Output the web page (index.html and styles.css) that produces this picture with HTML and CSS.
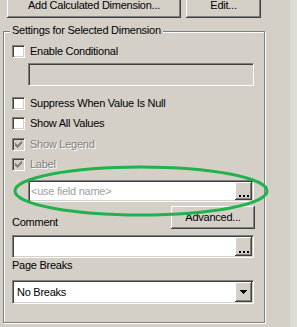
FILE: index.html
```html
<!DOCTYPE html>
<html lang="en">
<head>
    <meta charset="UTF-8">
    <meta name="viewport" content="width=device-width, initial-scale=1.0">
    <title>Dimension Properties</title>
    <link rel="stylesheet" href="styles.css">
</head>
<body>
    <div class="panel">
        <div class="top-buttons">
            <button class="btn btn-add">Add Calculated Dimension...</button>
            <button class="btn btn-edit">Edit...</button>
        </div>

        <div class="group">
            <span class="group-title">Settings for Selected Dimension</span>

            <label class="check-row row-enable">
                <span class="check"></span>Enable Conditional
            </label>
            <div class="field field-cond disabled"></div>

            <label class="check-row row-suppress">
                <span class="check"></span>Suppress When Value Is Null
            </label>
            <label class="check-row row-all">
                <span class="check"></span>Show All Values
            </label>
            <label class="check-row row-legend disabled">
                <span class="check"><svg width="9" height="9" viewBox="0 0 9 9"><path d="M7 1h1v1h-1z M6 2h2v1h-2z M1 3h1v1h-1z M5 3h3v1h-3z M1 4h2v1h-2z M4 4h3v1h-3z M1 5h5v1h-5z M2 6h3v1h-3z M3 7h1v1h-1z"/></svg></span>Show Legend
            </label>
            <label class="check-row row-label disabled">
                <span class="check"><svg width="9" height="9" viewBox="0 0 9 9"><path d="M7 1h1v1h-1z M6 2h2v1h-2z M1 3h1v1h-1z M5 3h3v1h-3z M1 4h2v1h-2z M4 4h3v1h-3z M1 5h5v1h-5z M2 6h3v1h-3z M3 7h1v1h-1z"/></svg></span>Label
            </label>

            <div class="field field-name">
                <span class="placeholder">&lt;use field name&gt;</span>
                <span class="field-btn"><svg width="10" height="2" viewBox="0 0 10 2"><path d="M0 0h2v2h-2z M4 0h2v2h-2z M8 0h2v2h-2z"/></svg></span>
            </div>

            <div class="comment-row">
                <span class="label">Comment</span>
                <button class="btn btn-advanced">Advanced...</button>
            </div>
            <div class="field field-comment">
                <span class="placeholder"></span>
                <span class="field-btn"><svg width="10" height="2" viewBox="0 0 10 2"><path d="M0 0h2v2h-2z M4 0h2v2h-2z M8 0h2v2h-2z"/></svg></span>
            </div>

            <span class="label page-label">Page Breaks</span>
            <div class="field field-select">
                <span class="value">No Breaks</span>
                <span class="field-btn arrow"><svg width="7" height="4" viewBox="0 0 7 4"><path d="M0 0h7v1h-7z M1 1h5v1h-5z M2 2h3v1h-3z M3 3h1v1h-1z"/></svg></span>
            </div>
        </div>
    </div>

    <!-- annotation drawn over the dialog -->
    <svg class="highlight" width="297" height="327" viewBox="0 0 297 327">
        <ellipse cx="141" cy="191" rx="126" ry="24" fill="none" stroke="#22b14c" stroke-width="3"/>
    </svg>
</body>
</html>
```

FILE: styles.css
```css
body {
    margin: 0;
    background-color: #dfdcd6;
    font-family: "Liberation Sans", Arial, sans-serif;
    font-size: 11px;
    letter-spacing: -0.25px;
    line-height: 13px;
    color: #000;
}
.panel {
    position: relative;
    width: 290px;
    height: 327px;
    background-color: #d4d0c8;
    overflow: hidden;
}
.top-buttons {
    display: flex;
    gap: 5px;
    padding-left: 7px;
    margin-top: -6px;
}
.btn {
    font: inherit;
    letter-spacing: inherit;
    color: #000;
    background-color: #d4d0c8;
    border: none;
    padding: 0;
    height: 24px;
    box-shadow: inset -1px -1px #404040, inset 1px 1px #fff, inset -2px -2px #808080;
}
.btn-add {
    width: 174px;
    padding-bottom: 1px;
}
.btn-edit {
    width: 75px;
    padding-bottom: 1px;
}
.btn-advanced {
    width: 84px;
    height: 23px;
    margin-right: -1px;
}
.group {
    position: relative;
    box-sizing: border-box;
    margin: 13px 0 0 3px;
    width: 262px;
    height: 292px;
    border: 1px solid #808080;
    box-shadow: inset 1px 1px #fff, 1px 1px #fff;
    padding: 13px 10px 0 8px;
    display: flex;
    flex-direction: column;
}
.group-title {
    position: absolute;
    top: -8px;
    left: 6px;
    padding: 0 2px;
    background-color: #d4d0c8;
}
.check-row {
    display: flex;
    align-items: center;
    gap: 5px;
    height: 13px;
    white-space: nowrap;
}
.check {
    box-sizing: border-box;
    flex: none;
    width: 13px;
    height: 13px;
    padding: 1px;
    border: 1px solid;
    border-color: #808080 #fff #fff #808080;
    box-shadow: inset 1px 1px #404040, inset -1px -1px #d4d0c8;
    background-color: #fff;
}
.check svg {
    display: block;
    fill: #000;
}
.check-row.disabled {
    color: #808080;
    text-shadow: 1px 1px #fff;
}
.check-row.disabled .check {
    background-color: #d4d0c8;
}
.check-row.disabled .check svg {
    fill: #808080;
}
.row-suppress { margin-top: 11px; }
.row-all { margin-top: 7px; }
.row-legend { margin-top: 8px; }
.row-label { margin-top: 7px; }

.field {
    box-sizing: border-box;
    display: flex;
    align-items: center;
    border: 1px solid;
    border-color: #808080 #fff #fff #808080;
    box-shadow: inset 1px 1px #404040, inset -1px -1px #d4d0c8;
    background-color: #fff;
    padding: 1px 1px 1px 2px;
}
.field.disabled {
    background-color: #d4d0c8;
}
.field-cond {
    margin: 5px 0 0 16px;
    height: 23px;
}
.field-name {
    margin: 9px 0 0 16px;
    height: 22px;
}
.field-comment {
    margin-top: 6px;
    height: 23px;
}
.field-select {
    margin-top: 8px;
    height: 24px;
    padding-left: 4px;
}
.placeholder {
    flex: 1;
    color: #a0a0a0;
}
.value {
    flex: 1;
}
.field-btn {
    box-sizing: border-box;
    align-self: stretch;
    width: 17px;
    display: flex;
    align-items: flex-end;
    justify-content: center;
    padding-bottom: 3px;
    background-color: #d4d0c8;
    box-shadow: inset -1px -1px #404040, inset 1px 1px #fff, inset -2px -2px #808080;
}
.field-btn svg {
    display: block;
    fill: #000;
}
.field-btn.arrow {
    align-items: center;
    padding-bottom: 0;
}
.comment-row {
    margin-top: 4px;
    display: flex;
    justify-content: space-between;
    align-items: flex-end;
}
.page-label {
    margin-top: 1px;
}
.highlight {
    position: absolute;
    top: 0;
    left: 0;
    pointer-events: none;
}
```
